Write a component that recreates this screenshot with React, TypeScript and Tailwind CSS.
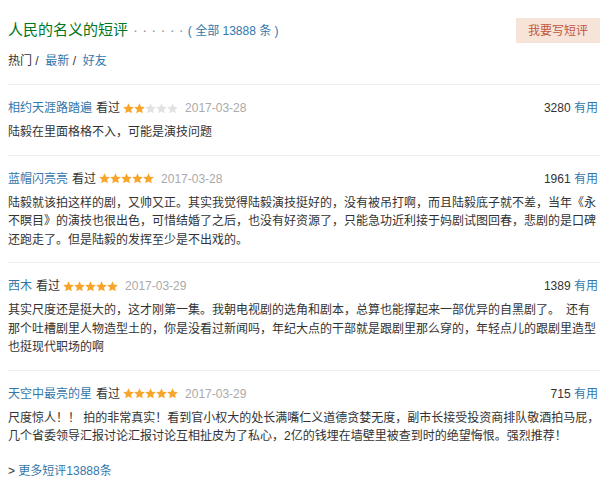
import React from "react";

interface Comment {
  id: number;
  user: string;
  rating: number;
  date: string;
  votes: number;
  text: string;
}

const comments: Comment[] = [
  {
    id: 1,
    user: "相约天涯路踏遍",
    rating: 2,
    date: "2017-03-28",
    votes: 3280,
    text: "陆毅在里面格格不入，可能是演技问题",
  },
  {
    id: 2,
    user: "蓝帽闪亮亮",
    rating: 5,
    date: "2017-03-28",
    votes: 1961,
    text: "陆毅就该拍这样的剧，又帅又正。其实我觉得陆毅演技挺好的，没有被吊打啊，而且陆毅底子就不差，当年《永不瞑目》的演技也很出色，可惜结婚了之后，也没有好资源了，只能急功近利接于妈剧试图回春，悲剧的是口碑还跑走了。但是陆毅的发挥至少是不出戏的。",
  },
  {
    id: 3,
    user: "西木",
    rating: 5,
    date: "2017-03-29",
    votes: 1389,
    text: "其实尺度还是挺大的，这才刚第一集。我朝电视剧的选角和剧本，总算也能撑起来一部优异的自黑剧了。\u2002还有那个吐槽剧里人物造型土的，你是没看过新闻吗，年纪大点的干部就是跟剧里那么穿的，年轻点儿的跟剧里造型也挺现代职场的啊",
  },
  {
    id: 4,
    user: "天空中最亮的星",
    rating: 5,
    date: "2017-03-29",
    votes: 715,
    text: "尺度惊人！！ 拍的非常真实！看到官小权大的处长满嘴仁义道德贪婪无度，副市长接受投资商排队敬酒拍马屁，几个省委领导汇报讨论汇报讨论互相扯皮为了私心，2亿的钱埋在墙壁里被查到时的绝望悔恨。强烈推荐！",
  },
];

function Star({ on }: { on: boolean }) {
  return (
    <svg width="11" height="11" viewBox="0 0 20 20" className="block">
      <path
        d="M10 0.4L12.82 6.72L19.7 7.45L14.57 12.08L16 18.85L10 15.4L4 18.85L5.43 12.08L0.3 7.45L7.18 6.72Z"
        fill={on ? "#f7a62b" : "#e2e2e2"}
      />
    </svg>
  );
}

function Stars({ n }: { n: number }) {
  return (
    <span className="inline-flex items-center mr-[4px]">
      {[1, 2, 3, 4, 5].map((i) => (
        <Star key={i} on={i <= n} />
      ))}
    </span>
  );
}

export default function App() {
  return (
    <div className="w-[612px] h-[503px] bg-white pl-[8px] pr-[12px] font-['Liberation_Sans','Noto_Sans_CJK_SC',sans-serif] text-[12px] text-[#333]">
      <div className="pt-[18px] flex items-center justify-between h-[43px]">
        <h2 className="flex items-baseline">
          <span className="text-[15px] text-[#072]">人民的名义的短评</span>
          <span className="text-[15px] text-[#999] ml-[5px]">· · · · · ·</span>
          <span className="text-[12px] text-[#37a] ml-[4px]">( 全部 13888 条 )</span>
        </h2>
        <button className="w-[84px] h-[25px] bg-[#f7e4d9] text-[#c0563f] text-[12px]">我要写短评</button>
      </div>

      <div className="mt-[9px] leading-[18px] text-[#333]">
        热门 /&nbsp; <span className="text-[#37a]">最新</span> /&nbsp; <span className="text-[#37a]">好友</span>
      </div>

      <div className="mt-[14px]">
        {comments.map((c) => (
          <div key={c.id} className="border-t border-[#eee] pt-[14px] pb-[13px]">
            <div className="flex items-center justify-between h-[18px] leading-[18px]">
              <div className="flex items-center">
                <span className="text-[#37a]">{c.user}</span>
                <span className="text-[#333] ml-[4px] mr-[3px]">看过</span>
                <Stars n={c.rating} />
                <span className="text-[#aaa] ml-[3px]">{c.date}</span>
              </div>
              <div className="pr-[2px]">
                <span className="text-[#333]">{c.votes}</span>{" "}
                <span className="text-[#37a]">有用</span>
              </div>
            </div>
            <p className="mt-[6px] leading-[18.5px] text-[#333]">{c.text}</p>
          </div>
        ))}
      </div>

      <div className="mt-[3px] leading-[18px]">
        <span className="text-[#333]">&gt; </span>
        <span className="text-[#37a]">更多短评13888条</span>
      </div>
    </div>
  );
}
